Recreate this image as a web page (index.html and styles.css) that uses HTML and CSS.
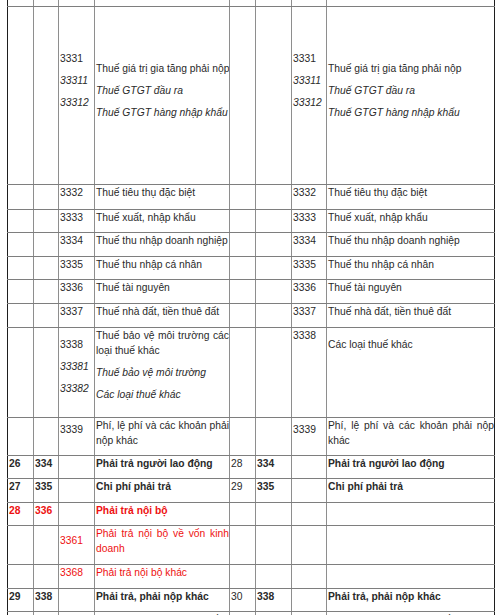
FILE: index.html
```html
<!DOCTYPE html>
<html lang="vi">
<head>
<meta charset="utf-8">
<title>Hệ thống tài khoản</title>
<link rel="stylesheet" href="styles.css">
</head>
<body>
<table class="ledger">
  <colgroup>
    <col class="c-no"><col class="c-acc"><col class="c-sub"><col class="c-name">
    <col class="c-no"><col class="c-sub2"><col class="c-sub3"><col class="c-name2">
  </colgroup>
  <tbody>
    <tr class="r-cut"><td></td><td></td><td></td><td></td><td></td><td></td><td></td><td></td></tr>
    <tr class="r-big">
      <td></td><td></td>
      <td class="pt44"><p>3331</p><p class="i">33311</p><p class="i">33312</p></td>
      <td class="pt54"><p class="nw">Thuế giá trị gia tăng phải nộp</p><p class="i">Thuế GTGT đầu ra</p><p class="i">Thuế GTGT hàng nhập khẩu</p></td>
      <td></td><td></td>
      <td class="pt44"><p>3331</p><p class="i">33311</p><p class="i">33312</p></td>
      <td class="pt54"><p>Thuế giá trị gia tăng phải nộp</p><p class="i">Thuế GTGT đầu ra</p><p class="i">Thuế GTGT hàng nhập khẩu</p></td>
    </tr>
    <tr class="h25"><td></td><td></td><td>3332</td><td>Thuế tiêu thụ đặc biệt</td><td></td><td></td><td>3332</td><td>Thuế tiêu thụ đặc biệt</td></tr>
    <tr class="h23"><td></td><td></td><td>3333</td><td>Thuế xuất, nhập khẩu</td><td></td><td></td><td>3333</td><td>Thuế xuất, nhập khẩu</td></tr>
    <tr class="h24"><td></td><td></td><td>3334</td><td>Thuế thu nhập doanh nghiệp</td><td></td><td></td><td>3334</td><td>Thuế thu nhập doanh nghiệp</td></tr>
    <tr class="h23"><td></td><td></td><td>3335</td><td>Thuế thu nhập cá nhân</td><td></td><td></td><td>3335</td><td>Thuế thu nhập cá nhân</td></tr>
    <tr class="h24"><td></td><td></td><td>3336</td><td>Thuế tài nguyên</td><td></td><td></td><td>3336</td><td>Thuế tài nguyên</td></tr>
    <tr class="h24"><td></td><td></td><td>3337</td><td>Thuế nhà đất, tiền thuê đất</td><td></td><td></td><td>3337</td><td>Thuế nhà đất, tiền thuê đất</td></tr>
    <tr class="h90">
      <td></td><td></td>
      <td class="pt9"><p>3338</p><p class="i">33381</p><p class="i">33382</p></td>
      <td class="pt1 j"><p>Thuế bảo vệ môi trường các loại thuế khác</p><p class="i">Thuế bảo vệ môi trường</p><p class="i">Các loại thuế khác</p></td>
      <td></td><td></td>
      <td>3338</td>
      <td class="pt9">Các loại thuế khác</td>
    </tr>
    <tr class="h38">
      <td></td><td></td>
      <td class="pt4">3339</td>
      <td class="j">Phí, lệ phí và các khoản phải nộp khác</td>
      <td></td><td></td>
      <td class="pt4">3339</td>
      <td class="j">Phí, lệ phí và các khoản phải nộp khác</td>
    </tr>
    <tr class="h23"><td class="b">26</td><td class="b">334</td><td></td><td class="b">Phải trả người lao động</td><td>28</td><td class="b">334</td><td></td><td class="b">Phải trả người lao động</td></tr>
    <tr class="h24"><td class="b">27</td><td class="b">335</td><td></td><td class="b">Chi phí phải trả</td><td>29</td><td class="b">335</td><td></td><td class="b">Chi phí phải trả</td></tr>
    <tr class="h23 red"><td class="b">28</td><td class="b">336</td><td></td><td class="b">Phải trả nội bộ</td><td></td><td></td><td></td><td></td></tr>
    <tr class="h39 red"><td></td><td></td><td class="pt7">3361</td><td class="j">Phải trả nội bộ về vốn kinh doanh</td><td></td><td></td><td></td><td></td></tr>
    <tr class="h24 red"><td></td><td></td><td>3368</td><td>Phải trả nội bộ khác</td><td></td><td></td><td></td><td></td></tr>
    <tr class="h23"><td class="b">29</td><td class="b">338</td><td></td><td class="b">Phải trả, phải nộp khác</td><td>30</td><td class="b">338</td><td></td><td class="b">Phải trả, phải nộp khác</td></tr>
    <tr class="h30"><td></td><td></td><td>3381</td><td>Tài sản thừa chờ giải quyết</td><td></td><td></td><td>3381</td><td>Tài sản thừa chờ giải quyết</td></tr>
  </tbody>
</table>
</body>
</html>
```

FILE: styles.css
```css
html, body {
  margin: 0;
  padding: 0;
  background: #ffffff;
}

body {
  font-family: "Liberation Sans", Arial, sans-serif;
  font-size: 10.3px;
  color: #2a2a2a;
  overflow: hidden;
}

.ledger {
  border-collapse: collapse;
  table-layout: fixed;
  width: 488px;
  margin-left: 7px;
}

.c-no { width: 26px; }
.c-acc { width: 25px; }
.c-sub { width: 36px; }
.c-name { width: 135px; }
.c-sub2 { width: 36px; }
.c-sub3 { width: 35px; }
.c-name2 { width: 168px; }

.ledger td {
  border-top: 1px solid #7e7e7e;
  border-bottom: 1px solid #7e7e7e;
  border-left: 1px solid #8e8e8e;
  border-right: 1px solid #8e8e8e;
  padding: 0 0 0 1px;
  vertical-align: top;
  line-height: 15px;
  text-align: left;
  overflow: hidden;
}

.ledger td:first-child {
  border-left: 1px solid #1e1e1e;
}

.ledger td:last-child {
  border-right: 1px solid #1e1e1e;
}

.ledger p {
  margin: 0 0 7px 0;
}

.ledger p:last-child {
  margin-bottom: 0;
}

.r-cut td { border-top: none; }
.r-cut { height: 6px; }
.r-big { height: 178px; }
.h23 { height: 23px; }
.h24 { height: 24px; }
.h25 { height: 25px; }
.h30 { height: 30px; }
.h38 { height: 38px; }
.h39 { height: 39px; }
.h90 { height: 90px; }

.pt1 { padding-top: 1px; }
.ledger td.pt4 { padding-top: 4px; }
.ledger td.pt7 { padding-top: 7px; }
.ledger td.pt9 { padding-top: 9px; }
.ledger td.pt44 { padding-top: 44px; }
.ledger td.pt54 { padding-top: 54px; }

.i { font-style: italic; }
.b { font-weight: bold; }
.j { text-align: justify; }
.ledger td.j { text-align: justify; }
.nw { white-space: nowrap; }

.red td { color: #ee1111; }
```
